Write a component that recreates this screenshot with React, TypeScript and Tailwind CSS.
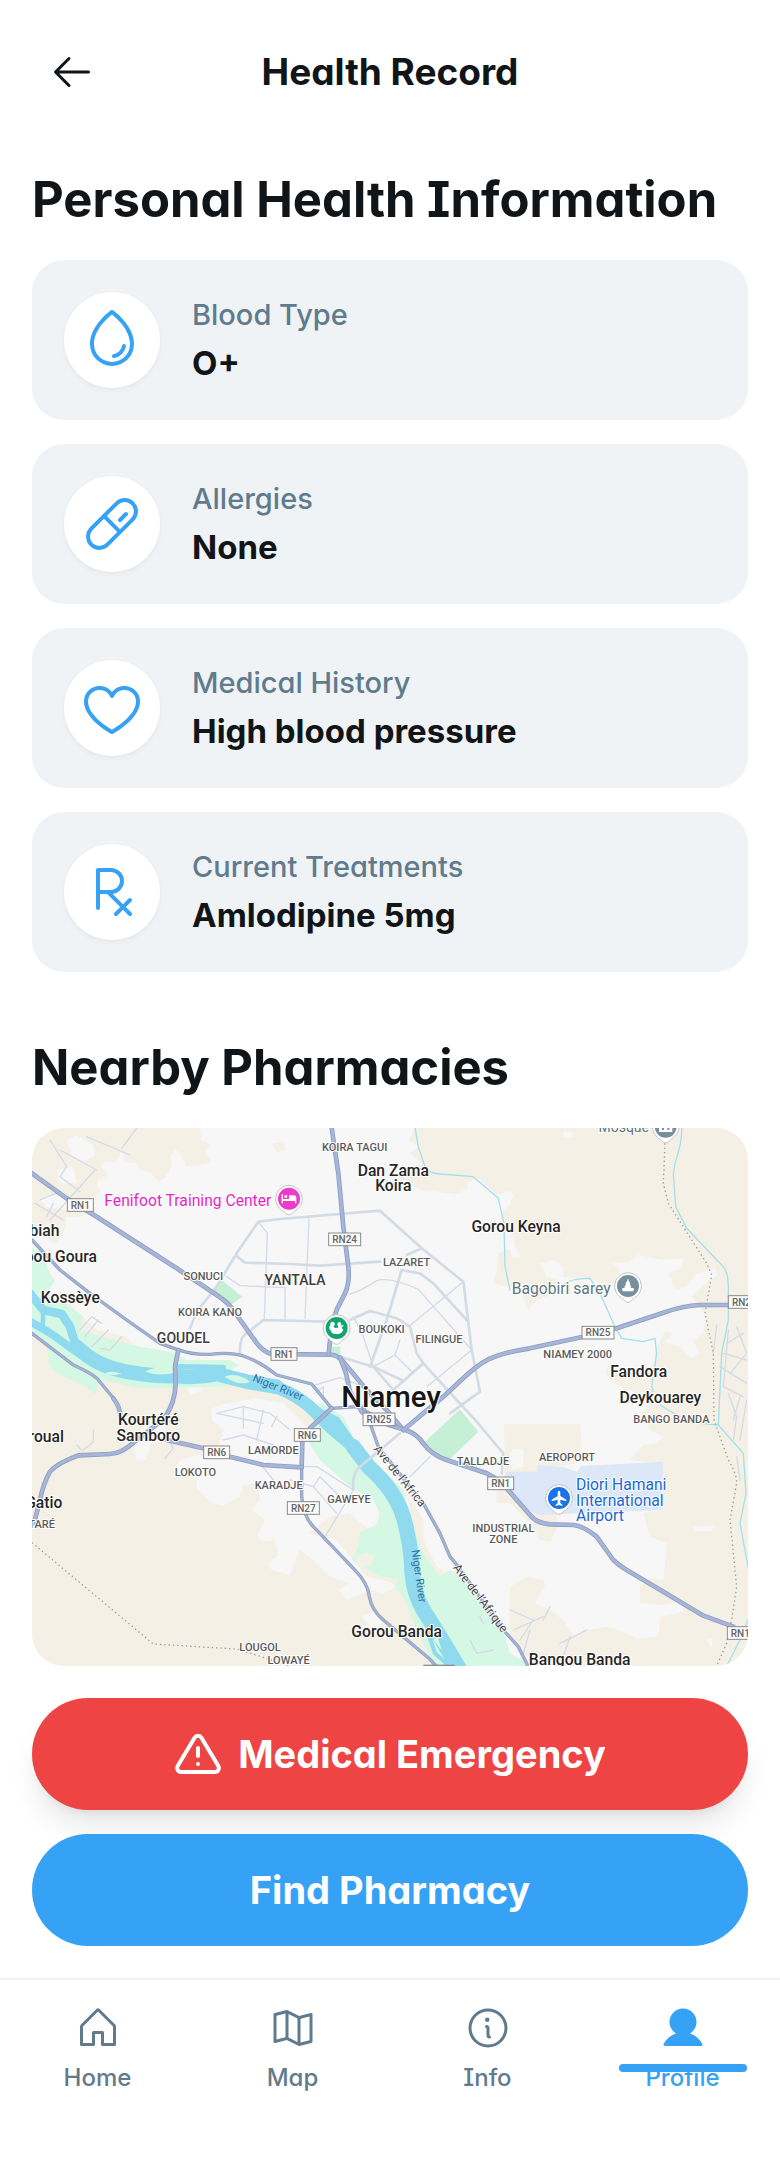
import { FiAlertTriangle } from "react-icons/fi";
import {
  PiArrowLeft,
  PiDrop,
  PiHeart,
  PiHouse,
  PiInfo,
  PiMapTrifold,
  PiPill,
  PiPrescription,
  PiUserFill,
} from "react-icons/pi";
import type { IconType } from "react-icons";

const records: { label: string; value: string; Icon: IconType }[] = [
  { label: "Blood Type", value: "O+", Icon: PiDrop },
  { label: "Allergies", value: "None", Icon: PiPill },
  { label: "Medical History", value: "High blood pressure", Icon: PiHeart },
  { label: "Current Treatments", value: "Amlodipine 5mg", Icon: PiPrescription },
];

const tabs: { label: string; Icon: IconType; active?: boolean }[] = [
  { label: "Home", Icon: PiHouse },
  { label: "Map", Icon: PiMapTrifold },
  { label: "Info", Icon: PiInfo },
  { label: "Profile", Icon: PiUserFill, active: true },
];

type Anchor = "start" | "middle" | "end";
type Place = { x: number; y: number; text: string; anchor?: Anchor };

const towns: Place[] = [
  { x: 88, y: 348, text: "biah", anchor: "end" },
  { x: 201, y: 425, text: "bou Goura", anchor: "end" },
  { x: 121, y: 550, text: "Kossèye" },
  { x: 1090, y: 167, text: "Dan Zama" },
  { x: 1090, y: 213, text: "Koira" },
  { x: 1458, y: 335, text: "Gorou Keyna" },
  { x: 1826, y: 770, text: "Fandora" },
  { x: 1891, y: 848, text: "Deykouarey" },
  { x: 355, y: 916, text: "Kourtéré" },
  { x: 355, y: 963, text: "Samboro" },
  { x: 102, y: 965, text: "roual", anchor: "end" },
  { x: 97, y: 1163, text: "Gatio", anchor: "end" },
  { x: 1100, y: 1550, text: "Gorou Banda" },
  { x: 1649, y: 1634, text: "Bangou Banda" },
];

const districts: Place[] = [
  { x: 520, y: 479, text: "SONUCI" },
  { x: 540, y: 587, text: "KOIRA KANO" },
  { x: 974, y: 94, text: "KOIRA TAGUI" },
  { x: 1130, y: 437, text: "LAZARET" },
  { x: 1055, y: 639, text: "BOUKOKI" },
  { x: 1227, y: 670, text: "FILINGUE" },
  { x: 1643, y: 715, text: "NIAMEY 2000" },
  { x: 1924, y: 908, text: "BANGO BANDA" },
  { x: 1611, y: 1022, text: "AEROPORT" },
  { x: 1359, y: 1034, text: "TALLADJE" },
  { x: 1420, y: 1237, text: "INDUSTRIAL" },
  { x: 1420, y: 1268, text: "ZONE" },
  { x: 496, y: 1067, text: "LOKOTO" },
  { x: 730, y: 1001, text: "LAMORDE" },
  { x: 746, y: 1107, text: "KARADJE" },
  { x: 957, y: 1150, text: "GAWEYE" },
  { x: 690, y: 1594, text: "LOUGOL" },
  { x: 776, y: 1631, text: "LOWAYÉ" },
  { x: 75, y: 1224, text: "TARÉ", anchor: "end" },
];

const shields: { x: number; y: number; w: number; text: string }[] = [
  { x: 151, y: 255, w: 78, text: "RN1" },
  { x: 944, y: 358, w: 96, text: "RN24" },
  { x: 762, y: 702, w: 78, text: "RN1" },
  { x: 1704, y: 638, w: 96, text: "RN25" },
  { x: 2143, y: 546, w: 96, text: "RN25" },
  { x: 1047, y: 898, w: 96, text: "RN25" },
  { x: 832, y: 945, w: 78, text: "RN6" },
  { x: 560, y: 997, w: 78, text: "RN6" },
  { x: 820, y: 1164, w: 96, text: "RN27" },
  { x: 1412, y: 1090, w: 78, text: "RN1" },
  { x: 2131, y: 1539, w: 78, text: "RN1" },
];

const highways = [
  "M6 160 L110 235 L200 290 L440 445 L560 525 Q600 550 620 585 L670 655 Q695 695 725 702 L900 704 Q925 706 940 725 L1010 810 L1070 870 L1120 930",
  "M905 24 L925 160 L940 320 L955 440 Q960 490 945 520 L922 565 L905 610 L896 704",
  "M930 712 L948 760 L960 815 L995 875 Q1050 910 1120 928 Q1160 940 1180 970 Q1205 1005 1250 1020 L1370 1060 Q1410 1080 1430 1105 L1500 1185 Q1520 1210 1560 1213 L1630 1215 Q1660 1218 1700 1250 L1750 1320 Q1765 1335 1790 1350 L1900 1415 L2020 1487 L2110 1520",
  "M1120 930 L1240 830 L1310 765 Q1360 720 1400 708 Q1440 694 1500 685 L1660 650 L1760 625 L1900 578 Q1960 557 2010 555 L2154 555",
  "M817 960 L815 1042 M905 865 L840 925",
  "M445 690 L435 740 L437 790 Q435 850 405 890 Q370 925 310 968 Q275 1000 240 1002 L145 1006 Q80 1030 60 1055 Q40 1090 30 1140 L12 1210",
  "M410 960 L520 985 L600 1010 L700 1035 L815 1042",
  "M250 835 Q270 860 272 890",
];

const avenues = [
  "M6 360 L90 450 L180 520 L290 600 L390 670 L440 688 Q490 705 540 703 Q600 695 640 708 Q690 725 740 765 L845 792 L905 865 L980 860 L1060 900",
  "M6 640 L130 735 Q190 762 205 780 L255 840",
  "M815 1040 L815 1130 Q820 1190 850 1220 L970 1345 Q1015 1390 1018 1430 Q1025 1470 1060 1500 L1200 1618 L1220 1640",
  "M1000 860 Q1025 920 1045 980 L1100 1050 L1180 1150 L1230 1240 L1260 1310 L1285 1340 L1420 1530 L1465 1580 L1495 1640",
];

const streets = [
  "M480 625 L500 575 L560 500 L620 400 L685 305 L750 297 L1050 272 L1175 385 L1300 485 L1325 690 L1350 815 L1260 880",
  "M620 408 L645 428 L780 432 L870 437 L1050 425",
  "M630 700 Q628 650 650 640 L700 600 L890 605",
  "M960 600 L1020 573 L1100 595 L1140 620 L1160 700 L1180 730 L1280 840 L1340 905 L1420 1000 L1415 1060",
  "M1175 385 L1130 405",
  "M1115 450 L1170 460 L1210 490 L1310 600",
  "M1115 450 L1070 600 L1020 740",
  "M930 710 L1030 740 L1115 780",
  "M1030 740 L1090 810 L1180 730",
  "M970 1110 Q965 1060 990 1040 L1110 940",
];

const lanes = [
  "M685 305 L712 340 L703 595",
  "M837 295 L825 595",
  "M590 470 L630 497 L765 503 L765 600",
  "M960 522 Q990 515 1040 482 Q1080 470 1165 508 L1325 690",
  "M1300 485 L1135 620",
  "M970 590 L1000 650 L1030 740",
  "M1325 690 L1190 800",
  "M1110 660 L1095 705 L1150 760",
  "M1095 705 L1030 740",
  "M1140 1070 L1200 1010",
  "M815 1040 L860 1040 L970 1110 L885 1250",
  "M850 1100 L870 1070 L930 1130",
  "M780 1080 L850 1100 L920 1180",
  "M855 820 L880 800 L880 830 M855 795 L930 773 L1000 800",
  "M1290 860 L1350 815",
  "M60 60 L110 140 L90 170 L150 215 M90 90 L200 150 M170 50 L300 105 M320 24 L275 85 M195 150 L60 300 M30 240 L90 215 M15 250 L100 300 M70 250 L50 290",
  "M150 630 L185 590 L215 610 M165 650 L205 600 M185 680 L235 630 M210 685 L240 690 L275 650",
  "M560 880 L640 860 L720 880 L780 930 M560 880 L700 910 M580 960 L640 945 L760 985 M640 860 L640 925 M700 870 L680 960 M740 890 L725 920 M690 1030 L730 1080",
  "M190 930 L190 965 L160 990 M140 975 L155 990 M420 965 L430 985 L405 1015",
  "M2060 615 L2050 700 M2095 630 L2080 800 L2140 830 M2120 620 L2150 700 L2100 760 M2080 700 L2150 720 M2090 670 L2140 640 M2070 740 L2150 790 M2095 820 L2120 890 L2110 960 M2130 830 L2110 900 M2150 840 L2130 960 M2120 1010 L2130 1080",
  "M1440 1470 L1510 1500 L1470 1560 M1450 1530 L1540 1490 M1500 1530 L1480 1600 M1590 1570 L1670 1530 M1620 1550 L1600 1610 M1560 1460 L1540 1500",
  "M1320 1560 L1340 1600 L1390 1590 M1350 1490 L1360 1510",
];

const streams = [
  "M1155 24 L1165 80 L1185 140 Q1195 160 1230 162 L1330 170 L1405 235 L1422 310 L1425 440 L1440 510",
  "M1955 24 Q1958 60 1935 130 L1930 160 L1937 260 L1970 325 L2080 440 Q2095 460 2095 500 L2095 600 L2075 700 L2065 915 L2140 1000 L2148 1120 L2130 1210 L2155 1345",
  "M1600 495 Q1620 475 1680 475 L1710 520 L1750 610 L1775 655 L1840 665 L1875 655 L1880 700 L1865 800 L1870 815",
  "M1890 855 L1940 885 L1990 908 L2065 915",
  "M2090 1638 L2130 1560 L2154 1500",
];

const borders =
  "M1905 70 L1900 190 L1915 250 L2030 430 L2045 465 L2025 580 L2050 700 L2052 900 L2095 1020 Q2120 1060 2120 1090 L2100 1200 L2120 1400 L2105 1500 L2090 1570 L2060 1638 M6 1268 L370 1572 L620 1587 L700 1612 L780 1640";

function Pin({ x, y, color, glyph }: { x: number; y: number; color: string; glyph: string }) {
  return (
    <g>
      <path
        d={`M${x - 40} ${y} a40 40 0 1 1 80 0 c0 26 -20 34 -30 44 q-10 10 -20 0 c-10 -10 -30 -18 -30 -44z`}
        fill="#fff"
        stroke="#c4c4c4"
        strokeWidth="3"
      />
      <circle cx={x} cy={y} r="33" fill={color} />
      <path d={glyph} transform={`translate(${x} ${y})`} fill="#fff" />
    </g>
  );
}

function CityMap() {
  return (
    <svg
      viewBox="6 24 2148 1614"
      role="img"
      aria-label="Map of pharmacies around Niamey"
      className="block h-auto w-full font-['Roboto',sans-serif]"
    >
      <rect x="0" y="0" width="2160" height="1640" fill="#f7f7f7" />

      {/* open land */}
      <g fill="#f5f0e5">
        <path d="M6 24 H508 L515 60 L545 75 L525 95 L545 125 L510 135 L470 140 L455 105 L435 88 L420 110 L425 135 L405 175 L385 185 L360 158 L330 150 L320 130 L285 125 L278 98 L255 128 L220 125 L215 145 L235 165 L200 185 L210 215 L190 235 L195 275 L150 290 L110 290 L100 345 L75 370 L40 350 L6 330z" />
        <path d="M725 70 L760 65 L768 90 L740 98z" />
        <path d="M80 560 L110 545 L160 590 L200 630 L290 650 L320 680 L220 670 L150 640z" />
        <path d="M6 630 L150 740 L330 790 L430 790 L700 790 L800 830 L960 960 L1050 1090 L1060 1200 L1160 1380 L1240 1640 L6 1640z" />
        <path d="M1156 24 L1135 60 L1165 80 L1140 100 L1175 130 L1130 165 L1100 170 L1175 210 L1280 222 L1315 205 L1310 185 L1350 175 L1400 225 L1440 212 L1450 225 L1440 255 L1415 275 L1410 300 L1450 340 L1455 380 L1475 410 L1450 415 L1435 385 L1405 400 L1400 460 L1390 490 L1430 500 L1480 495 L1480 540 L1495 570 L1520 540 L1590 515 L1580 480 L1550 470 L1530 430 L1570 420 L1600 440 L1600 470 L1690 480 L1745 500 L1770 450 L1745 425 L1790 430 L1825 405 L1900 420 L1960 415 L1955 445 L1915 460 L1940 510 L1970 500 L2000 460 L2055 445 L2062 465 L2030 490 L1985 530 L2010 560 L2030 590 L2020 640 L1990 660 L2010 700 L1985 715 L1950 680 L1905 665 L1930 640 L1905 635 L1875 690 L1870 760 L1740 760 L1740 720 L1725 760 L1750 790 L1870 840 L1835 880 L1860 930 L1900 950 L1880 970 L1840 975 L1800 1020 L1900 1030 L1895 1170 L1840 1180 L1860 1250 L1910 1270 L1900 1380 L1860 1375 L1830 1400 L1830 1450 L1900 1455 L1960 1440 L1960 1475 L1890 1490 L1885 1550 L1820 1555 L1740 1520 L1660 1530 L1600 1580 L1560 1638 H2160 V24z" />
        <path d="M1422 912 H1650 L1655 970 L1640 1030 L1580 1040 L1580 1230 L1560 1265 L1530 1260 L1500 1210 L1440 1150 L1400 1150 L1400 1120 L1425 1060z" />
        <path d="M1440 1400 L1490 1370 L1540 1380 L1545 1400 L1515 1450 L1560 1470 L1600 1500 L1640 1560 L1600 1638 L1510 1638 L1440 1540z" />
        <path d="M1130 1120 L1180 1200 L1180 1260 L1220 1340 L1270 1370 L1280 1345 L1300 1400 L1230 1400 L1160 1290z" />
      </g>

      {/* built-up land */}
      <g fill="#f7f7f7">
        <path d="M110 60 L140 45 L190 75 L195 105 L165 125 L125 105z M80 150 L130 140 L140 190 L90 190z M30 240 L90 220 L130 240 L110 270 L50 260z" />
        <path d="M545 865 L590 850 L680 835 L760 850 L870 960 L960 1060 L1040 1130 L1050 1220 L1010 1225 L960 1180 L900 1190 L835 1240 L880 1250 L920 1260 L960 1310 L1010 1370 L1080 1385 L1100 1400 L1060 1420 L1020 1410 L950 1440 L925 1410 L960 1390 L900 1370 L850 1320 L810 1290 L780 1365 L725 1350 L715 1330 L745 1305 L735 1260 L700 1265 L680 1250 L705 1200 L665 1170 L690 1140 L680 1090 L640 1095 L630 1130 L580 1155 L545 1150 L500 1105 L500 1070 L430 1065 L450 1020 L500 1005 L560 1010 L580 930 L545 900z" />
        <path d="M310 960 L360 900 L390 865 L410 870 L400 960 L360 970 L350 1020 L320 1020z M470 800 L510 795 L515 812 L485 825z" />
        <path d="M995 1490 L1040 1470 L1060 1510 L1030 1530z M1600 35 h28 v18 h-28z M1990 1220 l70 -4 -20 18 -50 0z M2030 1560 l18 -5 -4 30z M1440 1000 L1450 985 L1480 990 L1480 1040 L1445 1050z" />
      </g>

      {/* vegetation */}
      <g fill="#d4f8e3">
        <path d="M6 385 L40 395 L55 450 L75 485 L60 500 L60 530 L6 520z" />
        <path d="M6 520 L100 545 L160 590 L150 630 L250 660 L330 680 L420 695 L470 720 L600 720 L625 735 L590 760 L700 790 L560 800 L330 805 L200 775 L60 690 L6 630z" />
        <path d="M50 680 L60 740 L100 770 L160 795 L195 822 L205 800 L190 770z" />
        <path d="M870 845 L940 890 L970 950 L1060 1050 L1120 1110 L1140 1190 L1180 1300 L1230 1370 L1260 1350 L1330 1400 L1420 1530 L1440 1600 L1510 1640 L1215 1640 L1160 1530 L1120 1430 L1095 1400 L1105 1380 L1040 1365 L1010 1345 L965 1320 L985 1280 L990 1235 L1040 1215 L1050 1180 L1030 1140 L960 1100 L870 1020 L825 950z" />
      </g>
      <path d="M980 1310 L1010 1298 L1035 1312 L1020 1338 L980 1335z" fill="#f5f0e5" />
      <path d="M575 480 L637 530 L600 557 L550 512z M1290 868 L1345 935 L1260 1017 L1225 1008 L1185 965z M905 680 h26 v22 h-26z" fill="#c5f0d6" />

      {/* airport grounds */}
      <path
        d="M1456 1055 L1520 1055 L1525 1035 L1600 1042 L1640 1055 L1655 1038 L1900 1025 L1895 1170 L1650 1180 L1530 1185 L1480 1165 L1425 1110 L1425 1057z"
        fill="#dce7f7"
      />

      {/* river */}
      <g fill="none" stroke="#90daef" strokeLinecap="round" strokeLinejoin="round">
        <path d="M0 520 L40 570 L95 582 L120 620 L138 680" strokeWidth="26" />
        <path d="M0 605 Q60 635 110 675 Q170 720 230 738" strokeWidth="24" />
        <path d="M40 570 L38 620" strokeWidth="14" />
        <path d="M140 680 Q200 740 290 755 T440 768 Q500 775 560 762 L650 785 L740 800" strokeWidth="44" />
        <path d="M440 740 L580 742" strokeWidth="16" />
        <path d="M690 790 Q780 805 850 870 L900 920 L975 985" strokeWidth="38" />
        <path d="M860 870 L920 900 L955 950 L975 985" strokeWidth="20" />
        <path d="M970 980 L1015 1040 Q1095 1110 1120 1190 Q1140 1260 1145 1330 Q1145 1410 1180 1470 L1230 1550 L1290 1650" strokeWidth="46" />
        <path d="M1195 1540 L1215 1600 L1260 1640" strokeWidth="12" />
      </g>
      <path
        d="M225 760 Q240 750 275 760 Q250 772 225 760z M345 755 Q380 735 430 745 L435 758 Q390 770 345 755z M583 770 Q620 755 660 785 Q630 800 583 770z M1222 1548 L1235 1590 L1210 1560z"
        fill="#d4f8e3"
      />

      {/* roads */}
      <g fill="none" strokeLinecap="round" strokeLinejoin="round">
        {lanes.map((d) => (
          <path key={d} d={d} stroke="#d3dbe8" strokeWidth="4" />
        ))}
        {streets.map((d) => (
          <path key={d} d={d} stroke="#d3dce5" strokeWidth="8" />
        ))}
        {streams.map((d) => (
          <path key={d} d={d} stroke="#a4e0ec" strokeWidth="4" />
        ))}
        <path d={borders} stroke="#9a9a9a" strokeWidth="4" strokeDasharray="4 9" strokeLinecap="butt" />
        {avenues.map((d) => (
          <g key={d}>
            <path d={d} stroke="#8d9dc3" strokeWidth="10" />
            <path d={d} stroke="#a4b2d2" strokeWidth="6" />
          </g>
        ))}
        {highways.map((d) => (
          <g key={d}>
            <path d={d} stroke="#8d9dc3" strokeWidth="14" />
            <path d={d} stroke="#a7b6d6" strokeWidth="9" />
          </g>
        ))}
      </g>

      {/* road shields */}
      {shields.map(({ x, y, w, text }) => (
        <g key={`${x}-${y}`}>
          <rect x={x - w / 2} y={y - 19} width={w} height="38" fill="#fbfbfb" stroke="#8b8b8b" strokeWidth="3" />
          <text x={x} y={y + 11} textAnchor="middle" fontSize="30" fontWeight="500" fill="#666">
            {text}
          </text>
        </g>
      ))}
      <path d="M1180 1636 h94" stroke="#8b8b8b" strokeWidth="4" />

      {/* place names */}
      <g stroke="#fff" strokeWidth="6" strokeLinejoin="round" className="[paint-order:stroke]">
        {districts.map(({ x, y, text, anchor = "middle" }) => (
          <text key={text} x={x} y={y} textAnchor={anchor} fontSize="33" fontWeight="500" fill="#5a5a5a">
            {text}
          </text>
        ))}
        {towns.map(({ x, y, text, anchor = "middle" }) => (
          <text key={text} x={x} y={y} textAnchor={anchor} fontSize="47" fontWeight="500" fill="#262626">
            {text}
          </text>
        ))}
        <g fontSize="42" fontWeight="500" fill="#3c3c3c" textAnchor="middle">
          <text x="795" y="495">YANTALA</text>
          <text x="460" y="668">GOUDEL</text>
        </g>
        <text x="1083" y="860" textAnchor="middle" fontSize="88" fontWeight="500" fill="#151515">
          Niamey
        </text>
        <text x="724" y="258" textAnchor="end" fontSize="47" fill="#ea1fc6">
          Fenifoot Training Center
        </text>
        <g fill="#5c7480" fontSize="47" textAnchor="end">
          <text x="1742" y="523">Bagobiri sarey</text>
          <text x="1857" y="36" fontSize="42">Mosque</text>
        </g>
        <g fontSize="47" fill="#1967d2">
          <text x="1638" y="1110">Diori Hamani</text>
          <text x="1638" y="1157">International</text>
          <text x="1638" y="1203">Airport</text>
        </g>
      </g>
      <g fontSize="33" fill="#2f6f9f" textAnchor="middle">
        <text transform="translate(740 812) rotate(22)">Niger River</text>
        <text transform="translate(1156 1370) rotate(82)">Niger River</text>
      </g>
      <g fontSize="36" fill="#444" stroke="#fff" strokeWidth="5" textAnchor="middle" className="[paint-order:stroke]">
        <text transform="translate(1100 1075) rotate(51)">Ave de l’Africa</text>
        <text transform="translate(1342 1442) rotate(53)">Ave de l’Afrique</text>
      </g>

      <Pin
        x={777}
        y={236}
        color="#ee3cc9"
        glyph="M-22 -13 h4 v14 h18 v-11 h14 q8 0 8 8 v16 h-4 v-7 h-36 v7 h-4z M-14 -7 a4.500 4.500 0 1 1 0 1z"
      />
      <Pin
        x={920}
        y={624}
        color="#12a46f"
        glyph="M-19 -9 a7 7 0 1 1 9 4 l5 5 9 -1 0 -6 a6 6 0 1 1 8 0 l8 -2 v4 l-4 2 q-2 4 2 6 h2 q-2 12 -14 15 l-14 0 q-10 -4 -10 -12 l-4 -2 v-7z"
      />
      <Pin
        x={1794}
        y={498}
        color="#78909c"
        glyph="M-2 -20 h4 v5 l5 7 -2 3 5 8 -3 3 h10 v10 h-34 v-10 h8 l-2 -3 5 -8 -2 -3 6 -7z"
      />
      <Pin x={1907} y={20} color="#78909c" glyph="M-20 16 v-14 h9 v8 h6 v-8 h10 v8 h6 v-8 h9 v14z" />
      <Pin
        x={1587}
        y={1134}
        color="#1a73e8"
        glyph="M0 -22 q4 0 4 7 v9 l18 11 v5 l-18 -5 v10 l6 5 v4 l-10 -3 -10 3 v-4 l6 -5 v-10 l-18 5 v-5 l18 -11 v-9 q0 -7 4 -7z"
      />
    </svg>
  );
}

export default function App() {
  return (
    <div className="flex min-h-screen flex-col bg-white font-['Inter',sans-serif] text-[#111518] [font-feature-settings:'cv08','cv11']">
      <header className="flex items-center justify-between px-8 py-8">
        <button type="button" aria-label="Back" className="flex size-20 items-center justify-center">
          <PiArrowLeft className="size-12" />
        </button>
        <h1 className="flex-1 pr-20 text-center text-[37px] leading-[48px] font-bold">Health Record</h1>
      </header>

      <main className="flex flex-1 flex-col px-8">
        <h2 className="pt-6 pb-7 text-[49px] leading-[64px] font-bold">Personal Health Information</h2>
        <ul className="flex flex-col gap-6">
          {records.map(({ label, value, Icon }) => (
            <li key={label} className="flex items-center gap-8 rounded-[32px] bg-[#eff3f6] p-8">
              <div className="flex size-24 shrink-0 items-center justify-center rounded-full bg-white text-[#36a2f5] shadow-[0_2px_4px_rgba(0,0,0,0.05)]">
                <Icon className="size-16" />
              </div>
              <div>
                <p className="text-[29px] leading-[46px] font-medium text-[#5f7b8c]">{label}</p>
                <p className="text-[33px] leading-[50px] font-bold">{value}</p>
              </div>
            </li>
          ))}
        </ul>

        <h2 className="pt-16 pb-7 text-[49px] leading-[64px] font-bold">Nearby Pharmacies</h2>
        <div className="overflow-hidden rounded-[32px]">
          <CityMap />
        </div>

        <div className="flex flex-col gap-6 py-8 text-[38px] leading-[48px] font-bold text-white">
          <button
            type="button"
            className="flex h-28 items-center justify-center gap-4 rounded-full bg-[#ef4444] shadow-[0_20px_30px_-6px_rgba(0,0,0,0.1),0_8px_12px_-8px_rgba(0,0,0,0.1)]"
          >
            <FiAlertTriangle className="size-12" />
            Medical Emergency
          </button>
          <button type="button" className="flex h-28 items-center justify-center rounded-full bg-[#36a2f5]">
            Find Pharmacy
          </button>
        </div>
      </main>

      <nav className="grid grid-cols-4 border-t-2 border-[#eff3f6] pt-6 pb-16">
        {tabs.map(({ label, Icon, active }) => (
          <a
            key={label}
            href={`#${label.toLowerCase()}`}
            aria-current={active ? "page" : undefined}
            className={
              active
                ? "relative flex flex-col items-center gap-2 text-[#36a2f5]"
                : "relative flex flex-col items-center gap-2 text-[#5f7b8c]"
            }
          >
            <Icon className="size-12" />
            <span className="text-[24px] leading-[36px] font-medium">{label}</span>
            {active && <span className="absolute bottom-6 h-2 w-32 rounded-full bg-[#36a2f5]" />}
          </a>
        ))}
      </nav>
    </div>
  );
}
